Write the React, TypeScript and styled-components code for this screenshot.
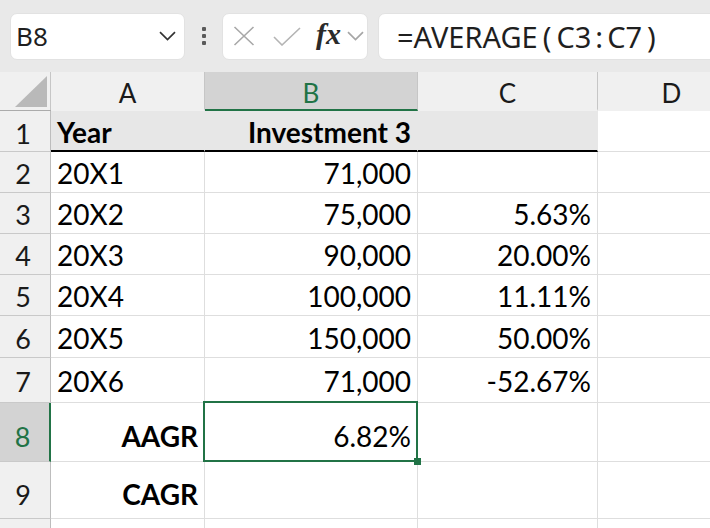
import React from 'react';
import styled, { createGlobalStyle } from 'styled-components';

const GREEN = '#217346';
const GRID = '#dedede';

const GlobalStyle = createGlobalStyle`
  html, body { margin: 0; padding: 0; background: #fff; }
  body { overflow: hidden; font-family: Lato, "Liberation Sans", sans-serif; }
  * { box-sizing: border-box; }
`;

const Page = styled.div`
  width: 710px;
  height: 528px;
  overflow: hidden;
  display: flex;
  flex-direction: column;
  background: #fff;
`;

const Toolbar = styled.div`
  height: 72px;
  flex: none;
  background: #e9e9e9;
  display: flex;
  align-items: center;
  padding-left: 10px;
  overflow: hidden;
`;

const Box = styled.div`
  height: 47px;
  background: #fff;
  border-radius: 7px;
  border: 1px solid #e2e2e2;
  display: flex;
  align-items: center;
  flex: none;
`;

const NameBox = styled(Box)`
  width: 175px;
  padding: 0 8px 0 5px;
  justify-content: space-between;
  font-family: "Noto Sans", "Open Sans", sans-serif;
  font-size: 26px;
  color: #1f1f1f;
`;

const Grip = styled.div`
  width: 37px;
  flex: none;
  display: flex;
  flex-direction: column;
  align-items: center;
  gap: 3px;
  & > i {
    width: 4px;
    height: 4px;
    background: #5a5a5a;
    border-radius: 1px;
  }
`;

const FuncBox = styled(Box)`
  width: 146px;
  padding-left: 10px;
`;

const Fx = styled.span`
  font-family: "Liberation Serif", "DejaVu Serif", serif;
  font-style: italic;
  font-weight: 700;
  font-size: 30px;
  color: #2a2a2a;
  margin: 0 6px 0 15px;
  line-height: 1;
  padding-bottom: 4px;
`;

const FormulaBox = styled(Box)`
  width: 420px;
  margin-left: 10px;
  padding-left: 18px;
  font-family: "Noto Sans", "Open Sans", sans-serif;
  font-size: 29px;
  color: #1f1f1f;
`;

const Punct = styled.span<{ $m: number }>`
  margin: 0 ${p => p.$m}px;
`;

const Sheet = styled.div`
  flex: 1;
  display: flex;
  flex-direction: column;
  overflow: hidden;
`;

const Row = styled.div<{ $h: number; $pad: number }>`
  display: grid;
  grid-template-columns: 51px 154px 213px 180px 148px;
  height: ${p => p.$h}px;
  flex: none;
  & > div {
    padding-bottom: ${p => p.$pad}px;
  }
`;

const HeaderRow = styled.div`
  display: grid;
  grid-template-columns: 51px 154px 213px 180px 148px;
  height: 39px;
  flex: none;
  background: #f0f0f0;
  border-bottom: 1px solid #ababab;
`;

const Corner = styled.div`
  display: flex;
  align-items: flex-end;
  justify-content: flex-end;
  padding: 0 3px 3px 0;
  border-right: 1px solid #c6c6c6;
`;

const ColHead = styled.div<{ $active?: boolean }>`
  display: flex;
  align-items: center;
  justify-content: center;
  padding-top: 5px;
  font-size: 26px;
  color: ${p => (p.$active ? GREEN : '#1a1a1a')};
  background: ${p => (p.$active ? '#d3d3d3' : '#f0f0f0')};
  border-right: 1px solid #c6c6c6;
  border-bottom: 2px solid ${p => (p.$active ? GREEN : 'transparent')};
  margin-bottom: -1px;
`;

const RowHead = styled.div<{ $active?: boolean }>`
  display: flex;
  align-items: flex-end;
  justify-content: center;
  padding-right: 4px;
  font-size: 27px;
  line-height: 1;
  color: ${p => (p.$active ? GREEN : '#1a1a1a')};
  background: ${p => (p.$active ? '#d3d3d3' : '#f0f0f0')};
  border-right: ${p => (p.$active ? `2px solid ${GREEN}` : '1px solid #bdbdbd')};
  border-bottom: 1px solid #c9c9c9;
`;

const Cell = styled.div<{ $right?: boolean; $bold?: boolean; $fill?: boolean; $selected?: boolean }>`
  position: relative;
  display: flex;
  align-items: flex-end;
  justify-content: ${p => (p.$right ? 'flex-end' : 'flex-start')};
  padding: 0 6px;
  font-size: 28px;
  line-height: 1;
  font-weight: ${p => (p.$bold ? 700 : 400)};
  color: #000;
  white-space: nowrap;
  background: ${p => (p.$fill ? '#e7e7e7' : '#fff')};
  border-right: 1px solid ${p => (p.$fill ? '#e7e7e7' : GRID)};
  border-bottom: ${p => (p.$fill ? '2px solid #000' : `1px solid ${GRID}`)};
  z-index: ${p => (p.$selected ? 2 : 0)};

  ${p =>
    p.$selected &&
    `
    &::after {
      content: '';
      position: absolute;
      top: -2px;
      left: -2px;
      right: -1px;
      bottom: -1px;
      border: 2px solid ${GREEN};
    }
    &::before {
      content: '';
      position: absolute;
      right: -4px;
      bottom: -4px;
      width: 7px;
      height: 7px;
      background: ${GREEN};
      z-index: 3;
    }
  `}
`;

const Chevron = ({ color }: { color: string }) => (
  <svg width="17" height="10" viewBox="0 0 17 10">
    <path d="M1 1.2 L8.5 8.5 L16 1.2" fill="none" stroke={color} strokeWidth="1.7" />
  </svg>
);

type RowData = {
  n: string;
  h: number;
  pad: number;
  a: string;
  b: string;
  c: string;
  head?: boolean;
  label?: boolean;
  sel?: boolean;
};

const rows: RowData[] = [
  { n: '1', h: 41, pad: 4, a: 'Year', b: 'Investment 3', c: '', head: true },
  { n: '2', h: 41, pad: 5, a: '20X1', b: '71,000', c: '' },
  { n: '3', h: 41, pad: 5, a: '20X2', b: '75,000', c: '5.63%' },
  { n: '4', h: 41, pad: 5, a: '20X3', b: '90,000', c: '20.00%' },
  { n: '5', h: 41, pad: 5, a: '20X4', b: '100,000', c: '11.11%' },
  { n: '6', h: 42, pad: 5, a: '20X5', b: '150,000', c: '50.00%' },
  { n: '7', h: 45, pad: 7, a: '20X6', b: '71,000', c: '-52.67%' },
  { n: '8', h: 59, pad: 11, a: 'AAGR', b: '6.82%', c: '', label: true, sel: true },
  { n: '9', h: 57, pad: 10, a: 'CAGR', b: '', c: '', label: true },
  { n: '', h: 20, pad: 0, a: '', b: '', c: '' },
];

export default function App() {
  return (
    <Page>
      <GlobalStyle />
      <Toolbar>
        <NameBox>
          <span>B8</span>
          <Chevron color="#333" />
        </NameBox>
        <Grip>
          <i />
          <i />
          <i />
        </Grip>
        <FuncBox>
          <svg width="22" height="20" viewBox="0 0 22 20">
            <path d="M1.5 1 L20.5 19 M20.5 1 L1.5 19" stroke="#a8a8a8" strokeWidth="1.6" />
          </svg>
          <svg width="28" height="19" viewBox="0 0 28 19" style={{ marginLeft: 18 }}>
            <path d="M1 10 L9 18 L27 1" fill="none" stroke="#b4b4b4" strokeWidth="1.6" />
          </svg>
          <Fx>fx</Fx>
          <Chevron color="#a6a6a6" />
        </FuncBox>
        <FormulaBox>
          =AVERAGE<Punct $m={5}>(</Punct>C3<Punct $m={4}>:</Punct>C7<Punct $m={5}>)</Punct>
        </FormulaBox>
      </Toolbar>

      <Sheet>
        <HeaderRow>
          <Corner>
            <svg width="32" height="31" viewBox="0 0 32 31">
              <polygon points="32,0 32,31 0,31" fill="#b9b9b9" />
            </svg>
          </Corner>
          <ColHead>A</ColHead>
          <ColHead $active>B</ColHead>
          <ColHead>C</ColHead>
          <ColHead>D</ColHead>
        </HeaderRow>

        {rows.map((r, i) => (
          <Row key={i} $h={r.h} $pad={r.pad}>
            <RowHead $active={r.sel}>{r.n}</RowHead>
            <Cell $bold={r.head || r.label} $right={r.label} $fill={r.head}>
              {r.a}
            </Cell>
            <Cell $right $bold={r.head} $fill={r.head} $selected={r.sel}>
              {r.b}
            </Cell>
            <Cell $right $fill={r.head}>
              {r.c}
            </Cell>
            <Cell />
          </Row>
        ))}
      </Sheet>
    </Page>
  );
}
